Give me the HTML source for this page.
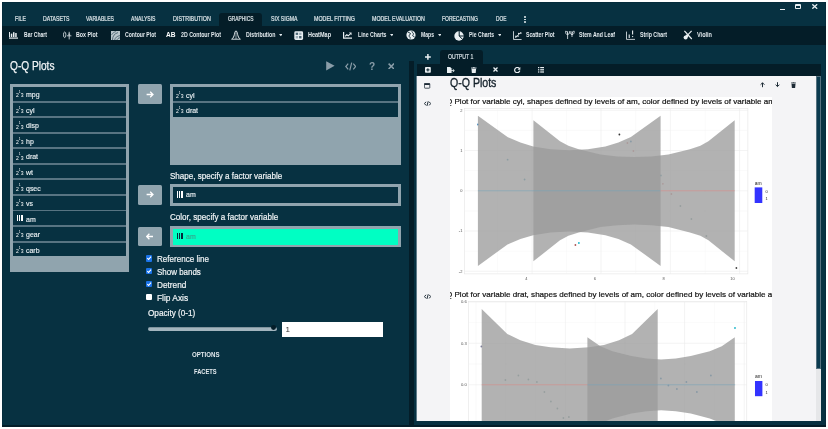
<!DOCTYPE html>
<html lang="en"><head><meta charset="utf-8"><title>Q-Q Plots</title>
<style>
html,body{margin:0;padding:0;background:#fff;}
body{width:828px;height:429px;position:relative;overflow:hidden;font-family:"Liberation Sans",sans-serif;}
#app{position:absolute;left:0;top:0;width:828px;height:429px;will-change:transform;}
.b{position:absolute;display:block;}
.t{position:absolute;white-space:nowrap;display:block;transform-origin:0 50%;}
</style></head><body><div id="app">
<div class="b" style="left:2.00px;top:2.00px;width:824.00px;height:424.50px;background:#073141;box-shadow:0 0 0 0.5px #052838 inset;"></div>
<div class="b" style="left:2.00px;top:25.70px;width:824.00px;height:19.10px;background:#041d28;"></div>
<div class="b" style="left:219.00px;top:13.00px;width:43.00px;height:13.50px;background:#041d28;border-radius:3px 3px 0 0;"></div>
<span class="t" style="left:14.50px;top:15.25px;font-size:6.7px;line-height:8.7px;transform:scaleX(0.7775);color:#dde5e9;-webkit-text-stroke:0.2px #dde5e9;">FILE</span>
<span class="t" style="left:42.50px;top:15.25px;font-size:6.7px;line-height:8.7px;transform:scaleX(0.7709);color:#dde5e9;-webkit-text-stroke:0.2px #dde5e9;">DATASETS</span>
<span class="t" style="left:86.00px;top:15.25px;font-size:6.7px;line-height:8.7px;transform:scaleX(0.7620);color:#dde5e9;-webkit-text-stroke:0.2px #dde5e9;">VARIABLES</span>
<span class="t" style="left:131.00px;top:15.25px;font-size:6.7px;line-height:8.7px;transform:scaleX(0.7591);color:#dde5e9;-webkit-text-stroke:0.2px #dde5e9;">ANALYSIS</span>
<span class="t" style="left:172.50px;top:15.25px;font-size:6.7px;line-height:8.7px;transform:scaleX(0.8038);color:#dde5e9;-webkit-text-stroke:0.2px #dde5e9;">DISTRIBUTION</span>
<span class="t" style="left:227.50px;top:15.25px;font-size:6.7px;line-height:8.7px;transform:scaleX(0.7287);color:#dde5e9;-webkit-text-stroke:0.2px #dde5e9;">GRAPHICS</span>
<span class="t" style="left:270.50px;top:15.25px;font-size:6.7px;line-height:8.7px;transform:scaleX(0.7737);color:#dde5e9;-webkit-text-stroke:0.2px #dde5e9;">SIX SIGMA</span>
<span class="t" style="left:314.00px;top:15.25px;font-size:6.7px;line-height:8.7px;transform:scaleX(0.7963);color:#dde5e9;-webkit-text-stroke:0.2px #dde5e9;">MODEL FITTING</span>
<span class="t" style="left:372.00px;top:15.25px;font-size:6.7px;line-height:8.7px;transform:scaleX(0.7924);color:#dde5e9;-webkit-text-stroke:0.2px #dde5e9;">MODEL EVALUATION</span>
<span class="t" style="left:442.00px;top:15.25px;font-size:6.7px;line-height:8.7px;transform:scaleX(0.7439);color:#dde5e9;-webkit-text-stroke:0.2px #dde5e9;">FORECASTING</span>
<span class="t" style="left:495.50px;top:15.25px;font-size:6.7px;line-height:8.7px;transform:scaleX(0.7232);color:#dde5e9;-webkit-text-stroke:0.2px #dde5e9;">DOE</span>
<div class="b" style="left:524.20px;top:16.20px;width:1.60px;height:1.60px;background:#e9eff2;border-radius:1px;"></div>
<div class="b" style="left:524.20px;top:18.80px;width:1.60px;height:1.60px;background:#e9eff2;border-radius:1px;"></div>
<div class="b" style="left:524.20px;top:21.40px;width:1.60px;height:1.60px;background:#e9eff2;border-radius:1px;"></div>
<div class="b" style="left:780.00px;top:9.00px;width:4.50px;height:1.20px;background:#e9eff2;"></div>
<div class="b" style="left:794.50px;top:3.60px;width:6.50px;height:5.00px;background:transparent;border:1.2px solid #e9eff2;border-top-width:2px;box-sizing:border-box;border-radius:1px;"></div>
<svg class="b" style="left:812.00px;top:4.00px;" width="5.5" height="5" viewBox="0 0 5.5 5"><path d="M0.3 0.3L5.2 4.7M5.2 0.3L0.3 4.7" stroke="#e9eff2" stroke-width="1.3" fill="none"/></svg>
<span class="t" style="left:24.00px;top:30.75px;font-size:6.5px;line-height:8.5px;transform:scaleX(0.7766);color:#e3eaee;font-weight:bold;">Bar Chart</span>
<span class="t" style="left:76.00px;top:30.75px;font-size:6.5px;line-height:8.5px;transform:scaleX(0.8156);color:#e3eaee;font-weight:bold;">Box Plot</span>
<span class="t" style="left:125.00px;top:30.75px;font-size:6.5px;line-height:8.5px;transform:scaleX(0.7878);color:#e3eaee;font-weight:bold;">Contour Plot</span>
<span class="t" style="left:181.00px;top:30.75px;font-size:6.5px;line-height:8.5px;transform:scaleX(0.8087);color:#e3eaee;font-weight:bold;">2D Contour Plot</span>
<span class="t" style="left:246.00px;top:30.75px;font-size:6.5px;line-height:8.5px;transform:scaleX(0.8090);color:#e3eaee;font-weight:bold;">Distribution</span>
<span class="t" style="left:308.00px;top:30.75px;font-size:6.5px;line-height:8.5px;transform:scaleX(0.8491);color:#e3eaee;font-weight:bold;">HeatMap</span>
<span class="t" style="left:357.50px;top:30.75px;font-size:6.5px;line-height:8.5px;transform:scaleX(0.7971);color:#e3eaee;font-weight:bold;">Line Charts</span>
<span class="t" style="left:421.00px;top:30.75px;font-size:6.5px;line-height:8.5px;transform:scaleX(0.7825);color:#e3eaee;font-weight:bold;">Maps</span>
<span class="t" style="left:469.00px;top:30.75px;font-size:6.5px;line-height:8.5px;transform:scaleX(0.7776);color:#e3eaee;font-weight:bold;">Pie Charts</span>
<span class="t" style="left:526.00px;top:30.75px;font-size:6.5px;line-height:8.5px;transform:scaleX(0.7890);color:#e3eaee;font-weight:bold;">Scatter Plot</span>
<span class="t" style="left:579.00px;top:30.75px;font-size:6.5px;line-height:8.5px;transform:scaleX(0.7953);color:#e3eaee;font-weight:bold;">Stem And Leaf</span>
<span class="t" style="left:640.00px;top:30.75px;font-size:6.5px;line-height:8.5px;transform:scaleX(0.8039);color:#e3eaee;font-weight:bold;">Strip Chart</span>
<span class="t" style="left:697.00px;top:30.75px;font-size:6.5px;line-height:8.5px;transform:scaleX(0.8535);color:#e3eaee;font-weight:bold;">Violin</span>
<span class="t" style="left:166.00px;top:30.30px;font-size:8px;line-height:10px;transform:scaleX(0.8222);color:#ffffff;font-weight:bold;">AB</span>
<svg class="b" style="left:278.70px;top:34.00px;" width="3.6" height="3" viewBox="0 0 3.6 3"><path d="M0 0H3.6L1.8 2.2Z" fill="#e3eaee"/></svg>
<svg class="b" style="left:389.70px;top:34.00px;" width="3.6" height="3" viewBox="0 0 3.6 3"><path d="M0 0H3.6L1.8 2.2Z" fill="#e3eaee"/></svg>
<svg class="b" style="left:437.70px;top:34.00px;" width="3.6" height="3" viewBox="0 0 3.6 3"><path d="M0 0H3.6L1.8 2.2Z" fill="#e3eaee"/></svg>
<svg class="b" style="left:497.70px;top:34.00px;" width="3.6" height="3" viewBox="0 0 3.6 3"><path d="M0 0H3.6L1.8 2.2Z" fill="#e3eaee"/></svg>
<svg class="b" style="left:9.00px;top:32.20px;" width="9.2" height="6.8" viewBox="0 0 9.2 6.8"><path d="M0.5 0V5.2" stroke="#e9eff2" stroke-width="1"/><path d="M0 6.1H9.2" stroke="#e9eff2" stroke-width="1.2"/><rect x="1.8" y="1.6" width="1.5" height="3.4" fill="#e9eff2"/><rect x="4" y="0.2" width="1.5" height="4.8" fill="#e9eff2"/><rect x="6.2" y="1" width="1.5" height="4" fill="#e9eff2"/></svg>
<svg class="b" style="left:62.50px;top:31.00px;" width="9" height="9" viewBox="0 0 9 9"><g stroke="#e9eff2" stroke-width="0.8" fill="none"><ellipse cx="1.7" cy="3.8" rx="1.2" ry="2.8"/><path d="M6.2 0.8V8.4M4 4.8H8.4M5.2 3.2H7.2"/></g></svg>
<svg class="b" style="left:111.00px;top:30.60px;" width="9.2" height="9.2" viewBox="0 0 9.2 9.2"><rect x="0" y="0" width="9.2" height="9.2" fill="#b9c6cc"/><path d="M1.5 9C1.5 5 3.6 2.6 7 1.6M3.6 9.2C4.2 6.6 5.8 5.2 9 4.6M0.6 3.8C1.6 2.2 2.8 1.2 4.8 0.6M6 9C6.4 7.8 7.4 7 9 6.8" stroke="#4a6472" stroke-width="0.9" fill="none"/></svg>
<svg class="b" style="left:231.00px;top:30.30px;" width="10" height="10" viewBox="0 0 10 10"><path d="M0.3 9.2H9.7" stroke="#e9eff2" stroke-width="0.9"/><path d="M1.2 8.6C3.4 8 3.6 0.8 5 0.8C6.4 0.8 6.6 8 8.8 8.6" stroke="#e9eff2" stroke-width="1" fill="none"/><path d="M5 3V9" stroke="#e9eff2" stroke-width="0.6"/></svg>
<svg class="b" style="left:294.40px;top:30.80px;" width="9.4" height="9.2" viewBox="0 0 9.4 9.2"><rect x="0.3" y="0.3" width="8.8" height="8.6" rx="1.4" fill="#e9eff2"/><rect x="1.7" y="1.7" width="2.4" height="2.2" fill="#4b6573"/><rect x="5.1" y="1.7" width="2.4" height="2.2" fill="#9fb0b9"/><rect x="1.7" y="5" width="2.4" height="2.4" fill="#9fb0b9"/><rect x="5.1" y="5" width="2.4" height="2.4" fill="#4b6573"/></svg>
<svg class="b" style="left:343.20px;top:31.80px;" width="9.2" height="6.8" viewBox="0 0 9.2 6.8"><path d="M0.6 0V6.1H9.2" stroke="#e9eff2" stroke-width="1.2" fill="none"/><path d="M2 4.4L3.8 2.8L5.2 3.8L7.6 1.6" stroke="#e9eff2" stroke-width="1.1" fill="none"/><path d="M6 0.6H8.6V3.2Z" fill="#e9eff2"/></svg>
<svg class="b" style="left:406.00px;top:30.30px;" width="10" height="10" viewBox="0 0 10 10"><circle cx="5" cy="5" r="4.6" fill="#e9eff2"/><path d="M2.2 2.4C3.4 3 4.6 2.6 4.4 4C4.2 5 2.8 4.8 3 6C3.2 7 4.4 7 4.2 8.6M6 1.2C5.6 2.4 7 2.6 7.4 3.6C7.8 4.6 6.4 5 6.8 6C7.2 6.8 8.2 6.4 8.6 7" stroke="#041d28" stroke-width="0.9" fill="none"/></svg>
<svg class="b" style="left:454.30px;top:30.50px;" width="10" height="10" viewBox="0 0 10 10"><circle cx="5" cy="5" r="4.7" fill="#e9eff2"/><path d="M5.2 5V0.2M5.2 5H9.8M5.2 5L8.6 8.4" stroke="#041d28" stroke-width="1" fill="none"/></svg>
<svg class="b" style="left:512.50px;top:30.80px;" width="9" height="9" viewBox="0 0 9 9"><path d="M0.5 0.2V8.5H8.6" stroke="#e9eff2" stroke-width="0.8" fill="none"/><path d="M2 7.2L7.4 1.6" stroke="#e9eff2" stroke-width="0.7"/><circle cx="3" cy="5.4" r="0.85" fill="#e9eff2"/><circle cx="5" cy="5" r="0.85" fill="#e9eff2"/><circle cx="5.8" cy="2.6" r="0.85" fill="#e9eff2"/><circle cx="7.8" cy="2" r="0.85" fill="#e9eff2"/></svg>
<svg class="b" style="left:565.00px;top:30.30px;" width="10" height="10" viewBox="0 0 10 10"><g stroke="#e9eff2" stroke-width="0.8" fill="none"><path d="M2.6 1.2V9M7 1.2V7"/><path d="M2.6 4.6C0.6 4.6 0.4 2.4 0.6 1.2C2.2 1.2 2.8 2.6 2.6 4.6ZM2.6 4.6C4.6 4.2 4.8 2.4 4.6 1.2M7 4.6C5.2 4.4 5 2.6 5.2 1.2M7 4.6C9 4.4 9.4 2.6 9.2 1.2C7.8 1.2 7 2.4 7 4.6Z"/></g></svg>
<svg class="b" style="left:626.00px;top:30.30px;" width="10" height="10" viewBox="0 0 10 10"><path d="M0.5 1.6V9.4H9" stroke="#e9eff2" stroke-width="0.8" fill="none"/><path d="M3.2 4.4V8M6.6 0.6V4.6" stroke="#e9eff2" stroke-width="1.1"/><circle cx="6.6" cy="6.6" r="0.7" fill="#e9eff2"/></svg>
<svg class="b" style="left:683.00px;top:30.30px;" width="10" height="10" viewBox="0 0 10 10"><path d="M1.4 0.8L8.8 9M8.6 0.8L3.4 6.4" stroke="#e9eff2" stroke-width="1.2" fill="none"/><circle cx="2.6" cy="7.4" r="2" fill="#e9eff2"/><circle cx="4" cy="6" r="1.4" fill="#e9eff2"/></svg>
<span class="t" style="left:10.00px;top:59.15px;font-size:12.3px;line-height:14.3px;transform:scaleX(0.8242);color:#f2f5f7;-webkit-text-stroke:0.25px #f2f5f7;">Q-Q Plots</span>
<svg class="b" style="left:326.00px;top:61.00px;" width="9" height="9.6" viewBox="0 0 9 9.6"><path d="M0.2 0.2L8.6 4.8L0.2 9.4Z" fill="#8a9da8"/></svg>
<svg class="b" style="left:344.50px;top:61.50px;" width="11.5" height="9" viewBox="0 0 11.5 9"><path d="M3.2 1.6L0.8 4.5L3.2 7.4M8.3 1.6L10.7 4.5L8.3 7.4M6.7 0.6L4.8 8.4" stroke="#8a9da8" stroke-width="1.2" fill="none"/></svg>
<span class="t" style="left:369.00px;top:59.50px;font-size:11px;line-height:13px;transform:scaleX(0.9228);color:#8a9da8;font-weight:bold;">?</span>
<svg class="b" style="left:387.60px;top:62.60px;" width="6.6" height="6.6" viewBox="0 0 6.6 6.6"><path d="M0.6 0.6L6 6M6 0.6L0.6 6" stroke="#8a9da8" stroke-width="1.5" fill="none"/></svg>
<div class="b" style="left:10.00px;top:84.00px;width:119.00px;height:187.60px;background:#90a4ae;"></div>
<div class="b" style="left:13.00px;top:87.00px;width:113.00px;height:169.20px;background:#587482;"></div>
<div class="b" style="left:13.00px;top:87.00px;width:113.00px;height:13.60px;background:#073141;"></div>
<span class="t" style="left:16.10px;top:92.40px;font-size:6px;line-height:7px;color:#ffffff;transform:scaleX(0.84)">2<span style="font-size:3.9px;position:relative;top:-4.4px;">1</span>3</span>
<span class="t" style="left:26.00px;top:90.25px;font-size:7.5px;line-height:9.5px;transform:scaleX(0.9300);color:#e9eff2;-webkit-text-stroke:0.15px #e9eff2;">mpg</span>
<div class="b" style="left:13.00px;top:102.56px;width:113.00px;height:13.60px;background:#073141;"></div>
<span class="t" style="left:16.10px;top:107.96px;font-size:6px;line-height:7px;color:#ffffff;transform:scaleX(0.84)">2<span style="font-size:3.9px;position:relative;top:-4.4px;">1</span>3</span>
<span class="t" style="left:26.00px;top:105.81px;font-size:7.5px;line-height:9.5px;transform:scaleX(0.9300);color:#e9eff2;-webkit-text-stroke:0.15px #e9eff2;">cyl</span>
<div class="b" style="left:13.00px;top:118.12px;width:113.00px;height:13.60px;background:#073141;"></div>
<span class="t" style="left:16.10px;top:123.52px;font-size:6px;line-height:7px;color:#ffffff;transform:scaleX(0.84)">2<span style="font-size:3.9px;position:relative;top:-4.4px;">1</span>3</span>
<span class="t" style="left:26.00px;top:121.37px;font-size:7.5px;line-height:9.5px;transform:scaleX(0.9300);color:#e9eff2;-webkit-text-stroke:0.15px #e9eff2;">disp</span>
<div class="b" style="left:13.00px;top:133.68px;width:113.00px;height:13.60px;background:#073141;"></div>
<span class="t" style="left:16.10px;top:139.08px;font-size:6px;line-height:7px;color:#ffffff;transform:scaleX(0.84)">2<span style="font-size:3.9px;position:relative;top:-4.4px;">1</span>3</span>
<span class="t" style="left:26.00px;top:136.93px;font-size:7.5px;line-height:9.5px;transform:scaleX(0.9300);color:#e9eff2;-webkit-text-stroke:0.15px #e9eff2;">hp</span>
<div class="b" style="left:13.00px;top:149.24px;width:113.00px;height:13.60px;background:#073141;"></div>
<span class="t" style="left:16.10px;top:154.64px;font-size:6px;line-height:7px;color:#ffffff;transform:scaleX(0.84)">2<span style="font-size:3.9px;position:relative;top:-4.4px;">1</span>3</span>
<span class="t" style="left:26.00px;top:152.49px;font-size:7.5px;line-height:9.5px;transform:scaleX(0.9300);color:#e9eff2;-webkit-text-stroke:0.15px #e9eff2;">drat</span>
<div class="b" style="left:13.00px;top:164.80px;width:113.00px;height:13.60px;background:#073141;"></div>
<span class="t" style="left:16.10px;top:170.20px;font-size:6px;line-height:7px;color:#ffffff;transform:scaleX(0.84)">2<span style="font-size:3.9px;position:relative;top:-4.4px;">1</span>3</span>
<span class="t" style="left:26.00px;top:168.05px;font-size:7.5px;line-height:9.5px;transform:scaleX(0.9300);color:#e9eff2;-webkit-text-stroke:0.15px #e9eff2;">wt</span>
<div class="b" style="left:13.00px;top:180.36px;width:113.00px;height:13.60px;background:#073141;"></div>
<span class="t" style="left:16.10px;top:185.76px;font-size:6px;line-height:7px;color:#ffffff;transform:scaleX(0.84)">2<span style="font-size:3.9px;position:relative;top:-4.4px;">1</span>3</span>
<span class="t" style="left:26.00px;top:183.61px;font-size:7.5px;line-height:9.5px;transform:scaleX(0.9300);color:#e9eff2;-webkit-text-stroke:0.15px #e9eff2;">qsec</span>
<div class="b" style="left:13.00px;top:195.92px;width:113.00px;height:13.60px;background:#073141;"></div>
<span class="t" style="left:16.10px;top:201.32px;font-size:6px;line-height:7px;color:#ffffff;transform:scaleX(0.84)">2<span style="font-size:3.9px;position:relative;top:-4.4px;">1</span>3</span>
<span class="t" style="left:26.00px;top:199.17px;font-size:7.5px;line-height:9.5px;transform:scaleX(0.9300);color:#e9eff2;-webkit-text-stroke:0.15px #e9eff2;">vs</span>
<div class="b" style="left:13.00px;top:211.48px;width:113.00px;height:13.60px;background:#073141;"></div>
<div class="b" style="left:16.50px;top:214.58px;width:1.55px;height:6.50px;background:#ffffff;"></div>
<div class="b" style="left:18.95px;top:214.58px;width:1.55px;height:6.50px;background:#ffffff;"></div>
<div class="b" style="left:21.40px;top:214.58px;width:1.55px;height:6.50px;background:#ffffff;"></div>
<span class="t" style="left:25.80px;top:214.73px;font-size:7.5px;line-height:9.5px;transform:scaleX(0.9300);color:#e9eff2;-webkit-text-stroke:0.15px #e9eff2;">am</span>
<div class="b" style="left:13.00px;top:227.04px;width:113.00px;height:13.60px;background:#073141;"></div>
<span class="t" style="left:16.10px;top:232.44px;font-size:6px;line-height:7px;color:#ffffff;transform:scaleX(0.84)">2<span style="font-size:3.9px;position:relative;top:-4.4px;">1</span>3</span>
<span class="t" style="left:26.00px;top:230.29px;font-size:7.5px;line-height:9.5px;transform:scaleX(0.9300);color:#e9eff2;-webkit-text-stroke:0.15px #e9eff2;">gear</span>
<div class="b" style="left:13.00px;top:242.60px;width:113.00px;height:13.60px;background:#073141;"></div>
<span class="t" style="left:16.10px;top:248.00px;font-size:6px;line-height:7px;color:#ffffff;transform:scaleX(0.84)">2<span style="font-size:3.9px;position:relative;top:-4.4px;">1</span>3</span>
<span class="t" style="left:26.00px;top:245.85px;font-size:7.5px;line-height:9.5px;transform:scaleX(0.9300);color:#e9eff2;-webkit-text-stroke:0.15px #e9eff2;">carb</span>
<div class="b" style="left:137.80px;top:84.30px;width:24.40px;height:19.90px;background:#90a4ae;border-radius:1.5px;"></div>
<svg class="b" style="left:146.20px;top:90.75px;" width="7.6" height="7" viewBox="0 0 7.6 7"><path d="M0.6 3.5H7M4.2 0.7L7 3.5L4.2 6.3" stroke="#fff" stroke-width="1.3" fill="none"/></svg>
<div class="b" style="left:137.80px;top:184.60px;width:24.40px;height:20.10px;background:#90a4ae;border-radius:1.5px;"></div>
<svg class="b" style="left:146.20px;top:191.15px;" width="7.6" height="7" viewBox="0 0 7.6 7"><path d="M0.6 3.5H7M4.2 0.7L7 3.5L4.2 6.3" stroke="#fff" stroke-width="1.3" fill="none"/></svg>
<div class="b" style="left:137.80px;top:227.10px;width:24.40px;height:19.30px;background:#90a4ae;border-radius:1.5px;"></div>
<svg class="b" style="left:146.20px;top:233.25px;" width="7.6" height="7" viewBox="0 0 7.6 7"><path d="M0.6 3.5H7M4.2 0.7L7 3.5L4.2 6.3" transform="translate(7.6 0) scale(-1 1)" stroke="#fff" stroke-width="1.3" fill="none"/></svg>
<div class="b" style="left:169.60px;top:84.00px;width:231.60px;height:80.60px;background:#90a4ae;"></div>
<div class="b" style="left:173.00px;top:87.40px;width:225.20px;height:29.20px;background:#587482;"></div>
<div class="b" style="left:173.00px;top:87.40px;width:225.20px;height:13.90px;background:#073141;"></div>
<span class="t" style="left:176.10px;top:92.95px;font-size:6px;line-height:7px;color:#ffffff;transform:scaleX(0.84)">2<span style="font-size:3.9px;position:relative;top:-4.4px;">1</span>3</span>
<span class="t" style="left:186.00px;top:90.80px;font-size:7.5px;line-height:9.5px;transform:scaleX(0.9300);color:#e9eff2;-webkit-text-stroke:0.15px #e9eff2;">cyl</span>
<div class="b" style="left:173.00px;top:103.00px;width:225.20px;height:13.60px;background:#073141;"></div>
<span class="t" style="left:176.10px;top:108.40px;font-size:6px;line-height:7px;color:#ffffff;transform:scaleX(0.84)">2<span style="font-size:3.9px;position:relative;top:-4.4px;">1</span>3</span>
<span class="t" style="left:186.00px;top:106.25px;font-size:7.5px;line-height:9.5px;transform:scaleX(0.9300);color:#e9eff2;-webkit-text-stroke:0.15px #e9eff2;">drat</span>
<span class="t" style="left:169.80px;top:170.60px;font-size:9.2px;line-height:11.2px;transform:scaleX(0.8757);color:#f2f5f7;-webkit-text-stroke:0.2px #f2f5f7;">Shape, specify a factor variable</span>
<div class="b" style="left:169.60px;top:184.20px;width:231.60px;height:21.80px;background:#90a4ae;"></div>
<div class="b" style="left:173.00px;top:187.40px;width:225.20px;height:15.40px;background:#073141;"></div>
<div class="b" style="left:176.50px;top:191.10px;width:1.55px;height:6.50px;background:#ffffff;"></div>
<div class="b" style="left:178.95px;top:191.10px;width:1.55px;height:6.50px;background:#ffffff;"></div>
<div class="b" style="left:181.40px;top:191.10px;width:1.55px;height:6.50px;background:#ffffff;"></div>
<span class="t" style="left:185.80px;top:190.45px;font-size:7.5px;line-height:9.5px;transform:scaleX(0.9300);color:#e9eff2;-webkit-text-stroke:0.15px #e9eff2;">am</span>
<span class="t" style="left:169.80px;top:212.20px;font-size:9.2px;line-height:11.2px;transform:scaleX(0.8789);color:#f2f5f7;-webkit-text-stroke:0.2px #f2f5f7;">Color, specify a factor variable</span>
<div class="b" style="left:169.60px;top:226.00px;width:231.60px;height:21.40px;background:#90a4ae;"></div>
<div class="b" style="left:173.00px;top:228.80px;width:225.20px;height:15.80px;background:#00ffc3;"></div>
<div class="b" style="left:176.50px;top:232.80px;width:1.55px;height:6.50px;background:#06283a;"></div>
<div class="b" style="left:178.95px;top:232.80px;width:1.55px;height:6.50px;background:#06283a;"></div>
<div class="b" style="left:181.40px;top:232.80px;width:1.55px;height:6.50px;background:#06283a;"></div>
<span class="t" style="left:185.80px;top:232.25px;font-size:7.5px;line-height:9.5px;transform:scaleX(0.9300);color:#35a58d;-webkit-text-stroke:0.15px #35a58d;">am</span>
<div class="b" style="left:146.00px;top:255.40px;width:6.20px;height:6.20px;background:#1a73e8;border-radius:1px;"></div>
<svg class="b" style="left:146.00px;top:255.40px;" width="6.2" height="6.2" viewBox="0 0 6.2 6.2"><path d="M1.3 3.2L2.6 4.5L5 1.7" stroke="#fff" stroke-width="1.1" fill="none"/></svg>
<span class="t" style="left:156.70px;top:254.40px;font-size:9.2px;line-height:11.2px;transform:scaleX(0.8783);color:#f2f5f7;-webkit-text-stroke:0.2px #f2f5f7;">Reference line</span>
<div class="b" style="left:146.00px;top:268.30px;width:6.20px;height:6.20px;background:#1a73e8;border-radius:1px;"></div>
<svg class="b" style="left:146.00px;top:268.30px;" width="6.2" height="6.2" viewBox="0 0 6.2 6.2"><path d="M1.3 3.2L2.6 4.5L5 1.7" stroke="#fff" stroke-width="1.1" fill="none"/></svg>
<span class="t" style="left:156.70px;top:267.30px;font-size:9.2px;line-height:11.2px;transform:scaleX(0.8670);color:#f2f5f7;-webkit-text-stroke:0.2px #f2f5f7;">Show bands</span>
<div class="b" style="left:146.00px;top:281.20px;width:6.20px;height:6.20px;background:#1a73e8;border-radius:1px;"></div>
<svg class="b" style="left:146.00px;top:281.20px;" width="6.2" height="6.2" viewBox="0 0 6.2 6.2"><path d="M1.3 3.2L2.6 4.5L5 1.7" stroke="#fff" stroke-width="1.1" fill="none"/></svg>
<span class="t" style="left:156.70px;top:280.20px;font-size:9.2px;line-height:11.2px;transform:scaleX(0.8983);color:#f2f5f7;-webkit-text-stroke:0.2px #f2f5f7;">Detrend</span>
<div class="b" style="left:146.00px;top:294.20px;width:6.20px;height:6.20px;background:#ffffff;border-radius:1px;"></div>
<span class="t" style="left:156.70px;top:293.20px;font-size:9.2px;line-height:11.2px;transform:scaleX(0.9109);color:#f2f5f7;-webkit-text-stroke:0.2px #f2f5f7;">Flip Axis</span>
<span class="t" style="left:147.60px;top:307.80px;font-size:9.2px;line-height:11.2px;transform:scaleX(0.8915);color:#f2f5f7;-webkit-text-stroke:0.2px #f2f5f7;">Opacity (0-1)</span>
<div class="b" style="left:147.60px;top:326.80px;width:129.40px;height:4.60px;background:#a3b5be;border-radius:2.3px;border-top:1.4px solid #7f939d;box-sizing:border-box;"></div>
<div class="b" style="left:271.20px;top:325.20px;width:5.30px;height:5.20px;background:#041d28;border-radius:50%;"></div>
<div class="b" style="left:282.20px;top:322.00px;width:100.40px;height:15.20px;background:#ffffff;"></div>
<span class="t" style="left:285.40px;top:324.80px;font-size:8px;line-height:10px;transform:scaleX(1.0000);color:#333;">1</span>
<span class="t" style="left:191.50px;top:350.95px;font-size:6.5px;line-height:8.5px;transform:scaleX(0.9401);color:#e3eaee;font-weight:bold;">OPTIONS</span>
<span class="t" style="left:194.30px;top:368.25px;font-size:6.5px;line-height:8.5px;transform:scaleX(0.8853);color:#e3eaee;font-weight:bold;">FACETS</span>
<div class="b" style="left:409.00px;top:61.00px;width:5.00px;height:365.50px;background:#041d28;"></div>
<svg class="b" style="left:425.00px;top:54.00px;" width="5.8" height="5.8" viewBox="0 0 5.8 5.8"><path d="M2.9 0V5.8M0 2.9H5.8" stroke="#e9eff2" stroke-width="1.5"/></svg>
<div class="b" style="left:439.50px;top:50.30px;width:43.00px;height:14.20px;background:#041d28;border-radius:3px 3px 0 0;"></div>
<span class="t" style="left:448.00px;top:52.75px;font-size:6.7px;line-height:8.7px;transform:scaleX(0.7665);color:#dfe7eb;-webkit-text-stroke:0.15px #dfe7eb;">OUTPUT 1</span>
<div class="b" style="left:416.50px;top:64.00px;width:404.50px;height:12.00px;background:#041d28;"></div>
<svg class="b" style="left:425.00px;top:66.90px;" width="5.8" height="5.8" viewBox="0 0 5.8 5.8"><rect x="0" y="0" width="5.8" height="5.8" rx="0.8" fill="#e9eff2"/><path d="M2.9 1.3V4.5M1.3 2.9H4.5" stroke="#041d28" stroke-width="1"/></svg>
<svg class="b" style="left:447.00px;top:66.60px;" width="7.6" height="6.4" viewBox="0 0 7.6 6.4"><path d="M0 0H3.2L4.6 1.4V6.4H0Z" fill="#e9eff2"/><path d="M3.4 3.6H7.2M5.8 2.2L7.3 3.6L5.8 5" stroke="#e9eff2" stroke-width="0.9" fill="none"/></svg>
<svg class="b" style="left:471.30px;top:66.60px;" width="5.6" height="6.4" viewBox="0 0 5.6 6.4"><path d="M0 1H5.6M1.9 0.4H3.7" stroke="#e9eff2" stroke-width="0.8"/><path d="M0.5 1.8H5.1L4.7 6.4H0.9Z" fill="#e9eff2"/></svg>
<svg class="b" style="left:493.40px;top:67.30px;" width="5" height="5" viewBox="0 0 5 5"><path d="M0.5 0.5L4.5 4.5M4.5 0.5L0.5 4.5" stroke="#e9eff2" stroke-width="1.3"/></svg>
<svg class="b" style="left:514.40px;top:66.60px;" width="6.4" height="6.4" viewBox="0 0 6.4 6.4"><path d="M5.2 1.4A2.6 2.6 0 1 0 5.8 3.6" stroke="#e9eff2" stroke-width="1.2" fill="none"/><path d="M6.3 0V2.7H3.6Z" fill="#e9eff2"/></svg>
<svg class="b" style="left:537.70px;top:67.00px;" width="6.8" height="5.6" viewBox="0 0 6.8 5.6"><g fill="#e9eff2"><rect x="0" y="0" width="1.3" height="1.2"/><rect x="0" y="2.2" width="1.3" height="1.2"/><rect x="0" y="4.4" width="1.3" height="1.2"/><rect x="2.2" y="0" width="4.6" height="1.2"/><rect x="2.2" y="2.2" width="4.6" height="1.2"/><rect x="2.2" y="4.4" width="4.6" height="1.2"/></g></svg>
<div class="b" style="left:416.00px;top:76.00px;width:400.30px;height:344.60px;background:#f4f4f6;border-left:1px solid #5f7b89;box-sizing:border-box;"></div>
<div class="b" style="left:816.30px;top:76.00px;width:5.00px;height:344.60px;background:#e6e7e9;"></div>
<div class="b" style="left:816.30px;top:76.00px;width:5.00px;height:292.60px;background:#0b3a4f;border:1px solid #55717f;box-sizing:border-box;"></div>
<div class="b" style="left:449.60px;top:96.70px;width:322.70px;height:323.90px;background:#ffffff;"></div>
<span class="t" style="left:449.80px;top:76.40px;font-size:12.4px;line-height:14.4px;transform:scaleX(0.8525);color:#13202a;-webkit-text-stroke:0.35px #13202a;">Q-Q Plots</span>
<svg class="b" style="left:424.40px;top:83.00px;" width="6.2" height="5.6" viewBox="0 0 6.2 5.6"><rect x="0.4" y="0.4" width="5.4" height="4.8" rx="0.6" fill="none" stroke="#1d2b36" stroke-width="0.8"/><rect x="0.4" y="0.4" width="5.4" height="1.6" fill="#1d2b36"/></svg>
<svg class="b" style="left:424.20px;top:100.80px;" width="7.2" height="5.2" viewBox="0 0 7.2 5.2"><path d="M2 0.8L0.5 2.6L2 4.4M5.2 0.8L6.7 2.6L5.2 4.4M4.2 0.3L3 4.9" stroke="#1d2b36" stroke-width="1" fill="none"/></svg>
<svg class="b" style="left:424.20px;top:294.00px;" width="7.2" height="5.2" viewBox="0 0 7.2 5.2"><path d="M2 0.8L0.5 2.6L2 4.4M5.2 0.8L6.7 2.6L5.2 4.4M4.2 0.3L3 4.9" stroke="#1d2b36" stroke-width="1" fill="none"/></svg>
<svg class="b" style="left:760.20px;top:82.40px;" width="5" height="5.4" viewBox="0 0 5 5.4"><path d="M2.5 5.2V0.9M0.6 2.7L2.5 0.8L4.4 2.7" stroke="#1d2b36" stroke-width="1" fill="none"/></svg>
<svg class="b" style="left:775.40px;top:82.40px;" width="5" height="5.4" viewBox="0 0 5 5.4"><path d="M2.5 0.2V4.5M0.6 2.7L2.5 4.6L4.4 2.7" stroke="#1d2b36" stroke-width="1" fill="none"/></svg>
<svg class="b" style="left:790.60px;top:81.80px;" width="5" height="6.2" viewBox="0 0 5 6.2"><path d="M0 0.9H5M1.7 0.3H3.3" stroke="#1d2b36" stroke-width="0.7"/><path d="M0.5 1.7H4.5L4.1 6.2H0.9Z" fill="#1d2b36"/></svg>
<div class="b" style="left:449.6px;top:95.6px;width:322.70px;height:12px;overflow:hidden"><span class="t" style="left:-12.60px;top:0;font-size:8.07px;line-height:12px;color:#111;-webkit-text-stroke:0.2px #111">Q-Q Plot for variable cyl, shapes defined by levels of am, color defined by levels of variable am</span></div>
<div class="b" style="left:449.6px;top:288.6px;width:322.70px;height:12px;overflow:hidden"><span class="t" style="left:-12.60px;top:0;font-size:8.07px;line-height:12px;color:#111;-webkit-text-stroke:0.2px #111">Q-Q Plot for variable drat, shapes defined by levels of am, color defined by levels of variable am</span></div>
<svg class="b" style="left:449.6px;top:106px" width="322.7" height="314.6" viewBox="449.6 106 322.7 314.6" font-family="Liberation Sans, sans-serif"><rect x="464" y="108.3" width="283.5" height="165.6" fill="#fff" stroke="#e4e4e4" stroke-width="0.6"/><path d="M464 110.3H747.5" stroke="#ececec" stroke-width="0.6"/><path d="M464 150.5H747.5" stroke="#ececec" stroke-width="0.6"/><path d="M464 190.8H747.5" stroke="#ececec" stroke-width="0.6"/><path d="M464 231H747.5" stroke="#ececec" stroke-width="0.6"/><path d="M464 271.3H747.5" stroke="#ececec" stroke-width="0.6"/><path d="M464 130.4H747.5" stroke="#f3f3f3" stroke-width="0.4"/><path d="M464 170.6H747.5" stroke="#f3f3f3" stroke-width="0.4"/><path d="M464 211H747.5" stroke="#f3f3f3" stroke-width="0.4"/><path d="M464 251.2H747.5" stroke="#f3f3f3" stroke-width="0.4"/><path d="M531.7 108.3V273.9" stroke="#ececec" stroke-width="0.6"/><path d="M600.6 108.3V273.9" stroke="#ececec" stroke-width="0.6"/><path d="M670 108.3V273.9" stroke="#ececec" stroke-width="0.6"/><path d="M739.2 108.3V273.9" stroke="#ececec" stroke-width="0.6"/><path d="M497.2 108.3V273.9" stroke="#f3f3f3" stroke-width="0.4"/><path d="M566.2 108.3V273.9" stroke="#f3f3f3" stroke-width="0.4"/><path d="M635.3 108.3V273.9" stroke="#f3f3f3" stroke-width="0.4"/><path d="M704.8 108.3V273.9" stroke="#f3f3f3" stroke-width="0.4"/><text x="462" y="111.7" font-size="4" fill="#555" text-anchor="end">2</text><text x="462" y="151.9" font-size="4" fill="#555" text-anchor="end">1</text><text x="462" y="192.20000000000002" font-size="4" fill="#555" text-anchor="end">0</text><text x="462" y="232.4" font-size="4" fill="#555" text-anchor="end">-1</text><text x="462" y="272.7" font-size="4" fill="#555" text-anchor="end">-2</text><text x="525.9" y="280" font-size="4" fill="#555" text-anchor="middle">4</text><text x="594.6" y="280" font-size="4" fill="#555" text-anchor="middle">6</text><text x="663.3" y="280" font-size="4" fill="#555" text-anchor="middle">8</text><text x="732" y="280" font-size="4" fill="#555" text-anchor="middle">10</text><circle cx="477.5" cy="124.5" r="0.9" fill="#4a90c4"/><circle cx="507.2" cy="159.7" r="0.9" fill="#5aa0b8"/><circle cx="524.2" cy="179.5" r="0.9" fill="#5aa0b8"/><circle cx="619" cy="134.5" r="0.9" fill="#333"/><circle cx="627" cy="143" r="0.9" fill="#d99"/><circle cx="630.5" cy="141.5" r="0.9" fill="#4a90c4"/><circle cx="633" cy="151" r="0.9" fill="#d99"/><circle cx="575" cy="245" r="0.9" fill="#a55"/><circle cx="578.5" cy="243" r="0.9" fill="#19b5c8"/><circle cx="736" cy="268" r="0.9" fill="#444"/><circle cx="660.5" cy="175.5" r="0.9" fill="#6ab"/><circle cx="662.5" cy="183.8" r="0.9" fill="#d99"/><circle cx="671" cy="194" r="0.9" fill="#d99"/><circle cx="680" cy="206" r="0.9" fill="#8aa"/><circle cx="691" cy="219" r="0.9" fill="#8aa"/><circle cx="706" cy="236" r="0.9" fill="#8aa"/><polygon points="477.5,115.7 507.1,137.1 520.0,142.6 532.8,146.4 550.3,149.2 569.0,150.2 587.5,149.2 605.0,146.4 618.0,142.6 630.5,137.1 660.2,115.7 660.2,265.9 630.5,244.5 618.0,239.0 605.0,235.2 587.5,232.4 569.0,231.4 550.3,232.4 532.8,235.2 520.0,239.0 507.1,244.5 477.5,265.9" fill="#9b9b9b" fill-opacity="0.77"/><polygon points="533.0,120.3 559.6,141.3 568.0,145.8 578.3,149.2 600.0,154.6 617.0,156.4 634.0,157.0 651.0,156.4 668.0,154.6 689.5,149.2 700.0,145.8 708.0,141.3 734.3,120.3 734.3,261.3 708.0,240.3 700.0,235.8 689.5,232.4 668.0,227.0 651.0,225.2 634.0,224.6 617.0,225.2 600.0,227.0 578.3,232.4 568.0,235.8 559.6,240.3 533.0,261.3" fill="#9b9b9b" fill-opacity="0.77"/><path d="M477.5 190.8H660.2" stroke="#6fa3bd" stroke-width="0.7" opacity="0.7"/><path d="M660.2 190.8H734.3" stroke="#dd8a86" stroke-width="0.7" opacity="0.8"/><text x="754.3" y="184.8" font-size="5" fill="#222">am</text><rect x="754.3" y="187.4" width="7.6" height="15.6" fill="#3333ff"/><text x="765" y="192.6" font-size="4" fill="#222">0</text><text x="765" y="200.4" font-size="4" fill="#222">1</text><rect x="468.2" y="301.6" width="278.2" height="125" fill="#fff" stroke="#e4e4e4" stroke-width="0.6"/><path d="M468.2 302H746.4" stroke="#ececec" stroke-width="0.6"/><path d="M468.2 343.3H746.4" stroke="#ececec" stroke-width="0.6"/><path d="M468.2 384.8H746.4" stroke="#ececec" stroke-width="0.6"/><path d="M468.2 322.6H746.4" stroke="#f3f3f3" stroke-width="0.4"/><path d="M468.2 364H746.4" stroke="#f3f3f3" stroke-width="0.4"/><path d="M505.4 301.5V421" stroke="#ececec" stroke-width="0.6"/><path d="M565 301.5V421" stroke="#ececec" stroke-width="0.6"/><path d="M624.6 301.5V421" stroke="#ececec" stroke-width="0.6"/><path d="M684.2 301.5V421" stroke="#ececec" stroke-width="0.6"/><path d="M743.8 301.5V421" stroke="#ececec" stroke-width="0.6"/><path d="M475.6 301.5V421" stroke="#f3f3f3" stroke-width="0.4"/><path d="M535.2 301.5V421" stroke="#f3f3f3" stroke-width="0.4"/><path d="M594.8 301.5V421" stroke="#f3f3f3" stroke-width="0.4"/><path d="M654.4 301.5V421" stroke="#f3f3f3" stroke-width="0.4"/><path d="M714 301.5V421" stroke="#f3f3f3" stroke-width="0.4"/><text x="466.4" y="303.5" font-size="4.2" fill="#555" text-anchor="end">0.6</text><text x="466.4" y="344.8" font-size="4.2" fill="#555" text-anchor="end">0.3</text><text x="466.4" y="386.3" font-size="4.2" fill="#555" text-anchor="end">0.0</text><circle cx="481" cy="346.5" r="0.9" fill="#779"/><circle cx="505" cy="380" r="0.9" fill="#8aa"/><circle cx="518" cy="375.5" r="0.9" fill="#8aa"/><circle cx="528" cy="379.5" r="0.9" fill="#8aa"/><circle cx="536.5" cy="382" r="0.9" fill="#8aa"/><circle cx="544" cy="392" r="0.9" fill="#8aa"/><circle cx="550.5" cy="401.5" r="0.9" fill="#8aa"/><circle cx="557" cy="408.5" r="0.9" fill="#8aa"/><circle cx="563" cy="418" r="0.9" fill="#8aa"/><circle cx="568.5" cy="417" r="0.9" fill="#8aa"/><circle cx="660.5" cy="378.5" r="0.9" fill="#4a90c4"/><circle cx="668" cy="385.5" r="0.9" fill="#4a90c4"/><circle cx="676.5" cy="389" r="0.9" fill="#4a90c4"/><circle cx="686" cy="382" r="0.9" fill="#4a90c4"/><circle cx="696.5" cy="392" r="0.9" fill="#4a90c4"/><circle cx="710.5" cy="375.5" r="0.9" fill="#4a90c4"/><circle cx="734.6" cy="328" r="0.9" fill="#19b5c8"/><polygon points="481.3,309.0 506.9,334.0 520.0,340.3 535.0,345.0 550.0,347.3 569.3,348.4 588.6,347.3 603.6,345.0 618.6,340.3 631.7,334.0 657.3,309.0 657.3,460.6 631.7,435.6 618.6,429.3 603.6,424.6 588.6,422.3 569.3,421.2 550.0,422.3 535.0,424.6 520.0,429.3 506.9,435.6 481.3,460.6" fill="#9b9b9b" fill-opacity="0.77"/><polygon points="587.0,337.2 600.0,346.2 612.0,351.2 631.0,356.0 646.0,358.4 660.7,359.4 675.4,358.4 690.4,356.0 709.4,351.2 721.4,346.2 734.4,337.2 734.4,432.4 721.4,423.4 709.4,418.4 690.4,413.6 675.4,411.2 660.7,410.2 646.0,411.2 631.0,413.6 612.0,418.4 600.0,423.4 587.0,432.4" fill="#9b9b9b" fill-opacity="0.77"/><path d="M481.3 384.8H587" stroke="#dd8a86" stroke-width="0.7" opacity="0.8"/><path d="M587 384.8H734.8" stroke="#6fa3bd" stroke-width="0.7" opacity="0.7"/><text x="754.6" y="377.8" font-size="5" fill="#222">am</text><rect x="754.6" y="381" width="7.4" height="15.2" fill="#3333ff"/><text x="765" y="386.2" font-size="4" fill="#222">0</text><text x="765" y="394" font-size="4" fill="#222">1</text></svg>
<div class="b" style="left:2.00px;top:424.50px;width:824.00px;height:2.00px;background:#041d28;"></div>
</div></body></html>
